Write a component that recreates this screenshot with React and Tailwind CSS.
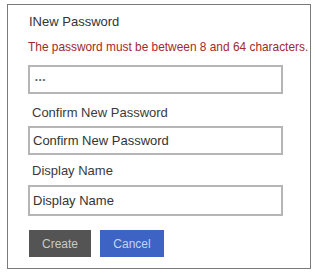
import React from 'react';

const App = () => {
  return (
    <div className="w-[315px] h-[273px] bg-white pt-[4px] pl-[7px]" style={{ fontFamily: '"Liberation Sans", Arial, sans-serif' }}>
      <div className="w-[304px] h-[265px] border border-[#7a7a7a] pl-[20px] pt-[9px] flex flex-col">
        <p className="text-[13px] leading-[16px] text-[#333] pl-[1px]">INew Password</p>
        <p className="mt-[10px] text-[11.9px] leading-[14px] text-[#a12a2a] whitespace-nowrap">
          The password must be between 8 and 64 characters.
        </p>
        <div className="mt-[11px] w-[255px] h-[29px] border-2 border-[#b5b5b5] flex items-center pl-[5px] text-[8px] text-[#666] tracking-[1px]">
          •••
        </div>
        <p className="mt-[11px] text-[13px] leading-[16px] text-[#3a3a3a] pl-[4px]">Confirm New Password</p>
        <div className="mt-[5px] w-[255px] h-[29px] border-2 border-[#b5b5b5] flex items-center pl-[3px] text-[13px] text-[#333]">
          Confirm New Password
        </div>
        <p className="mt-[8px] text-[13px] leading-[16px] text-[#3a3a3a] pl-[4px]">Display Name</p>
        <div className="mt-[6px] w-[255px] h-[31px] border-2 border-[#b5b5b5] flex items-center pl-[3px] text-[13px] text-[#333]">
          Display Name
        </div>
        <div className="mt-[14px] flex gap-[9px] pl-[1px]">
          <button className="w-[62px] h-[27px] bg-[#545454] text-[#c9c9c9] text-[12px]">Create</button>
          <button className="w-[64px] h-[27px] bg-[#3d63c4] text-[#c6d2f0] text-[12px]">Cancel</button>
        </div>
      </div>
    </div>
  );
};

export default App;
